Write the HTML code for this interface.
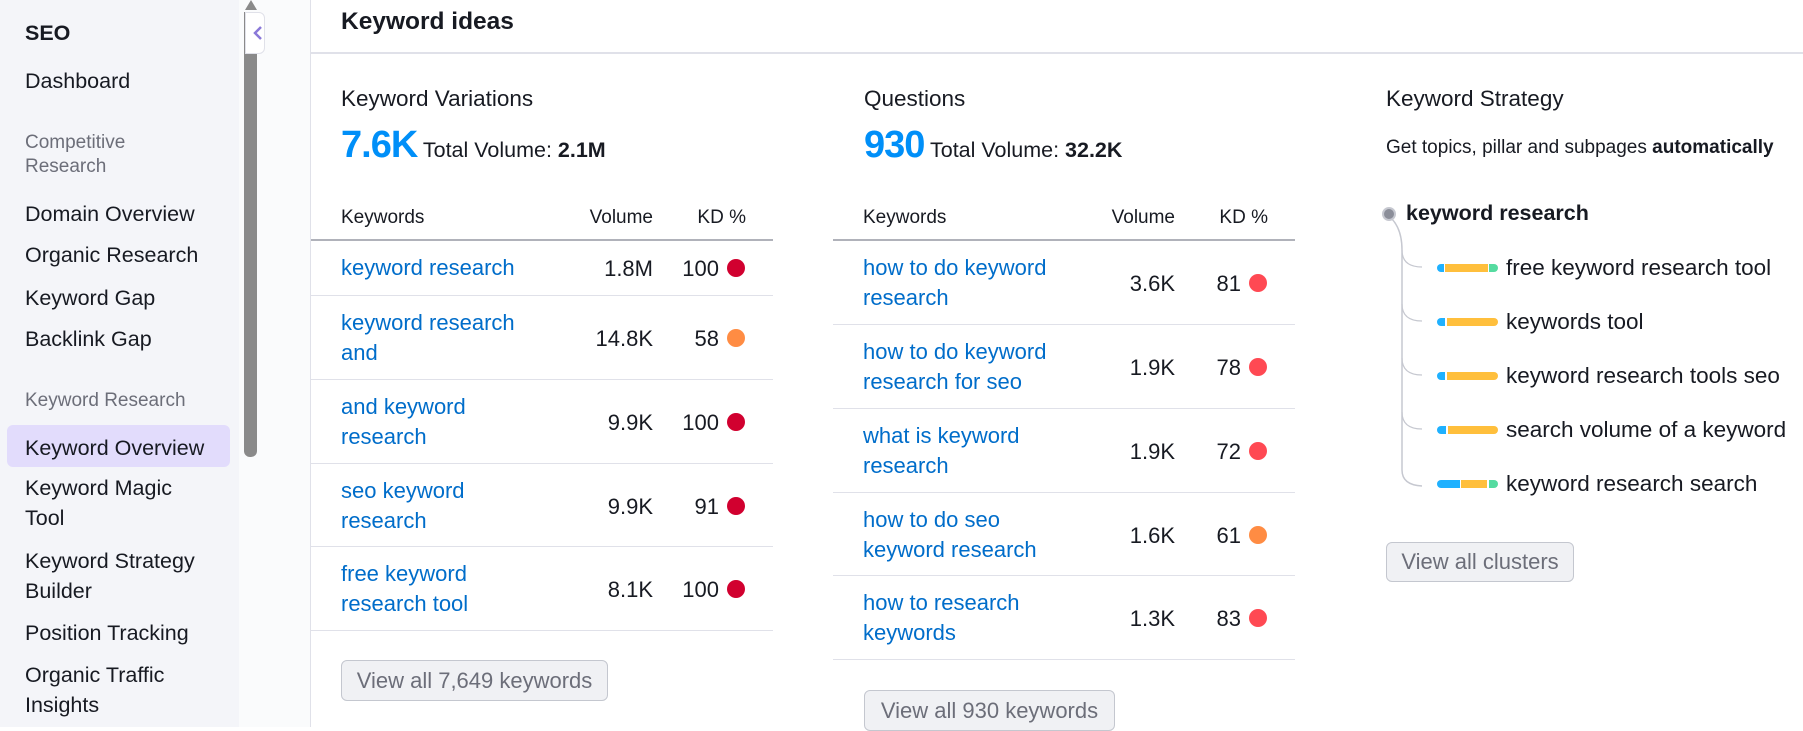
<!DOCTYPE html><html><head><style>
*{margin:0;padding:0;box-sizing:border-box}
body{width:1803px;height:727px;overflow:hidden;background:#fff;font-family:"Liberation Sans",sans-serif;color:#171a22;position:relative}
.a{position:absolute;white-space:nowrap}
#side{position:absolute;left:0;top:0;width:239px;height:727px;background:#f4f5f9}
.si{position:absolute;left:25px;font-size:21.5px;color:#171a22;line-height:30px;white-space:nowrap}
.sg{position:absolute;left:25px;font-size:19px;color:#6c6e79;line-height:24px}
.tbl{position:absolute;width:462px}
.hd{height:41px;border-bottom:2px solid #b0b2ba;font-size:19px;position:relative}
.row{border-bottom:1px solid #e0e1e9;position:relative;font-size:22px}
.kw{position:absolute;left:30px;color:#006dca;line-height:30px}
.vol{position:absolute;right:120px;}
.kd{position:absolute;right:54px;}
.dot{position:absolute;right:28px;width:18px;height:18px;border-radius:50%}
.btn{position:absolute;border:1px solid #c4c7cf;background:#f0f1f4;border-radius:6px;color:#6c6e79;font-size:22px;text-align:center}
.ch{position:absolute;left:1437px;height:8px;width:61px}
.ct{position:absolute;left:1506px;font-size:22.5px}
</style></head><body>
<div id="side">
<div class="si" style="top:18px;font-weight:bold">SEO</div>
<div class="si" style="top:66px">Dashboard</div>
<div class="sg" style="top:131px">Competitive<br>Research</div>
<div class="si" style="top:199px">Domain Overview</div>
<div class="si" style="top:240px">Organic Research</div>
<div class="si" style="top:283px">Keyword Gap</div>
<div class="si" style="top:324px">Backlink Gap</div>
<div class="sg" style="top:389px">Keyword Research</div>
<div style="position:absolute;left:7px;top:425px;width:223px;height:42px;background:#e2dcfc;border-radius:6px"></div>
<div class="si" style="top:433px">Keyword Overview</div>
<div class="si" style="top:473px">Keyword Magic<br>Tool</div>
<div class="si" style="top:546px">Keyword Strategy<br>Builder</div>
<div class="si" style="top:618px">Position Tracking</div>
<div class="si" style="top:660px">Organic Traffic<br>Insights</div>
</div>
<div style="position:absolute;left:239px;top:0;width:72px;height:727px;background:#fafbfc;border-right:1px solid #e0e1e9"></div>
<div style="position:absolute;left:244px;top:12px;width:13px;height:445px;background:#8a8a8a;border-radius:0 0 6px 6px"></div>
<div style="position:absolute;top:0;width:0;height:0;border-left:6px solid transparent;border-right:6px solid transparent;border-bottom:10px solid #8a8a8a;left:245px"></div>
<div style="position:absolute;left:245px;top:12px;width:20px;height:42px;background:#fff;border:1px solid #e0e1e9;border-radius:0 6px 6px 0"></div>
<svg class="a" style="left:252px;top:24px" width="12" height="18"><path d="M9 3 L3 9 L9 15" stroke="#8a78d8" stroke-width="2.5" fill="none"/></svg>

<div class="a" style="left:341px;top:7px;font-size:24.5px;font-weight:bold;line-height:30px">Keyword ideas</div>
<div style="position:absolute;left:311px;top:52px;width:1492px;height:2px;background:#e0e1e9"></div>

<div class="a" style="left:341px;top:86px;font-size:22.5px">Keyword Variations</div>
<div class="a" style="left:341px;top:124px;font-size:21.5px"><span style="font-size:38px;font-weight:bold;color:#008ff8;letter-spacing:-1px">7.6K</span> Total Volume: <b>2.1M</b></div>
<div class="a" style="left:864px;top:86px;font-size:22.5px">Questions</div>
<div class="a" style="left:864px;top:124px;font-size:21.5px"><span style="font-size:38px;font-weight:bold;color:#008ff8;letter-spacing:-1px">930</span> Total Volume: <b>32.2K</b></div>
<div class="a" style="left:1386px;top:86px;font-size:22.5px">Keyword Strategy</div>
<div class="a" style="left:1386px;top:137px;font-size:19px">Get topics, pillar and subpages <b>automatically</b></div>

<div class="tbl" style="left:311px;top:200px">
<div class="hd"><span class="a" style="left:30px;top:7px">Keywords</span><span class="a" style="right:120px;top:7px">Volume</span><span class="a" style="right:27px;top:7px">KD %</span></div>
<div class="row" style="height:55px"><span class="kw" style="top:12px">keyword research</span><span class="a vol" style="top:15px">1.8M</span><span class="a kd" style="top:15px">100</span><span class="dot" style="top:18px;background:#d1002f"></span></div>
<div class="row" style="height:84px"><span class="kw" style="top:12px">keyword research<br>and</span><span class="a vol" style="top:30px">14.8K</span><span class="a kd" style="top:30px">58</span><span class="dot" style="top:33px;background:#ff8c43"></span></div>
<div class="row" style="height:84px"><span class="kw" style="top:12px">and keyword<br>research</span><span class="a vol" style="top:30px">9.9K</span><span class="a kd" style="top:30px">100</span><span class="dot" style="top:33px;background:#d1002f"></span></div>
<div class="row" style="height:83px"><span class="kw" style="top:12px">seo keyword<br>research</span><span class="a vol" style="top:30px">9.9K</span><span class="a kd" style="top:30px">91</span><span class="dot" style="top:33px;background:#d1002f"></span></div>
<div class="row" style="height:84px"><span class="kw" style="top:12px">free keyword<br>research tool</span><span class="a vol" style="top:30px">8.1K</span><span class="a kd" style="top:30px">100</span><span class="dot" style="top:33px;background:#d1002f"></span></div>
</div>
<div class="btn" style="left:341px;top:660px;width:267px;height:41px;line-height:39px">View all 7,649 keywords</div>

<div class="tbl" style="left:833px;top:200px">
<div class="hd"><span class="a" style="left:30px;top:7px">Keywords</span><span class="a" style="right:120px;top:7px">Volume</span><span class="a" style="right:27px;top:7px">KD %</span></div>
<div class="row" style="height:84px"><span class="kw" style="top:12px">how to do keyword<br>research</span><span class="a vol" style="top:30px">3.6K</span><span class="a kd" style="top:30px">81</span><span class="dot" style="top:33px;background:#ff4953"></span></div>
<div class="row" style="height:84px"><span class="kw" style="top:12px">how to do keyword<br>research for seo</span><span class="a vol" style="top:30px">1.9K</span><span class="a kd" style="top:30px">78</span><span class="dot" style="top:33px;background:#ff4953"></span></div>
<div class="row" style="height:84px"><span class="kw" style="top:12px">what is keyword<br>research</span><span class="a vol" style="top:30px">1.9K</span><span class="a kd" style="top:30px">72</span><span class="dot" style="top:33px;background:#ff4953"></span></div>
<div class="row" style="height:83px"><span class="kw" style="top:12px">how to do seo<br>keyword research</span><span class="a vol" style="top:30px">1.6K</span><span class="a kd" style="top:30px">61</span><span class="dot" style="top:33px;background:#ff8c43"></span></div>
<div class="row" style="height:84px"><span class="kw" style="top:12px">how to research<br>keywords</span><span class="a vol" style="top:30px">1.3K</span><span class="a kd" style="top:30px">83</span><span class="dot" style="top:33px;background:#ff4953"></span></div>
</div>
<div class="btn" style="left:864px;top:690px;width:251px;height:41px;line-height:39px">View all 930 keywords</div>

<svg class="a" style="left:1380px;top:200px" width="60" height="300">
<circle cx="9" cy="14" r="6" fill="#8b8e99" stroke="#c6c8d0" stroke-width="2"/>
<path d="M12 19 Q22 30 22 50 V270 Q22 285 42 286" stroke="#c6c8d0" stroke-width="1.5" fill="none"/>
<path d="M22 50 Q22 67 42 67 M22 104 Q22 121 42 121 M22 158 Q22 175 42 175 M22 212 Q22 229 42 229" stroke="#c6c8d0" stroke-width="1.2" fill="none"/>
</svg>
<div class="a" style="left:1406px;top:201px;font-size:21.5px;font-weight:bold">keyword research</div>
<div class="ch" style="top:264px;background:linear-gradient(90deg,#1fb1ff 0 7px,#fff 7px 8px,#ffbf3c 8px 51px,#fff 51px 52px,#55dba0 52px);border-radius:4px"></div>
<div class="ch" style="top:318px;background:linear-gradient(90deg,#1fb1ff 0 8px,#fff 8px 10px,#ffbf3c 10px);border-radius:4px"></div>
<div class="ch" style="top:372px;background:linear-gradient(90deg,#1fb1ff 0 8px,#fff 8px 10px,#ffbf3c 10px);border-radius:4px"></div>
<div class="ch" style="top:426px;background:linear-gradient(90deg,#1fb1ff 0 9px,#fff 9px 11px,#ffbf3c 11px);border-radius:4px"></div>
<div class="ch" style="top:480px;background:linear-gradient(90deg,#1fb1ff 0 23px,#fff 23px 24px,#ffbf3c 24px 50px,#fff 50px 52px,#55dba0 52px);border-radius:4px"></div>
<div class="ct" style="top:255px">free keyword research tool</div>
<div class="ct" style="top:309px">keywords tool</div>
<div class="ct" style="top:363px">keyword research tools seo</div>
<div class="ct" style="top:417px">search volume of a keyword</div>
<div class="ct" style="top:471px">keyword research search</div>
<div class="btn" style="left:1386px;top:542px;width:188px;height:40px;line-height:38px">View all clusters</div>
</body></html>
